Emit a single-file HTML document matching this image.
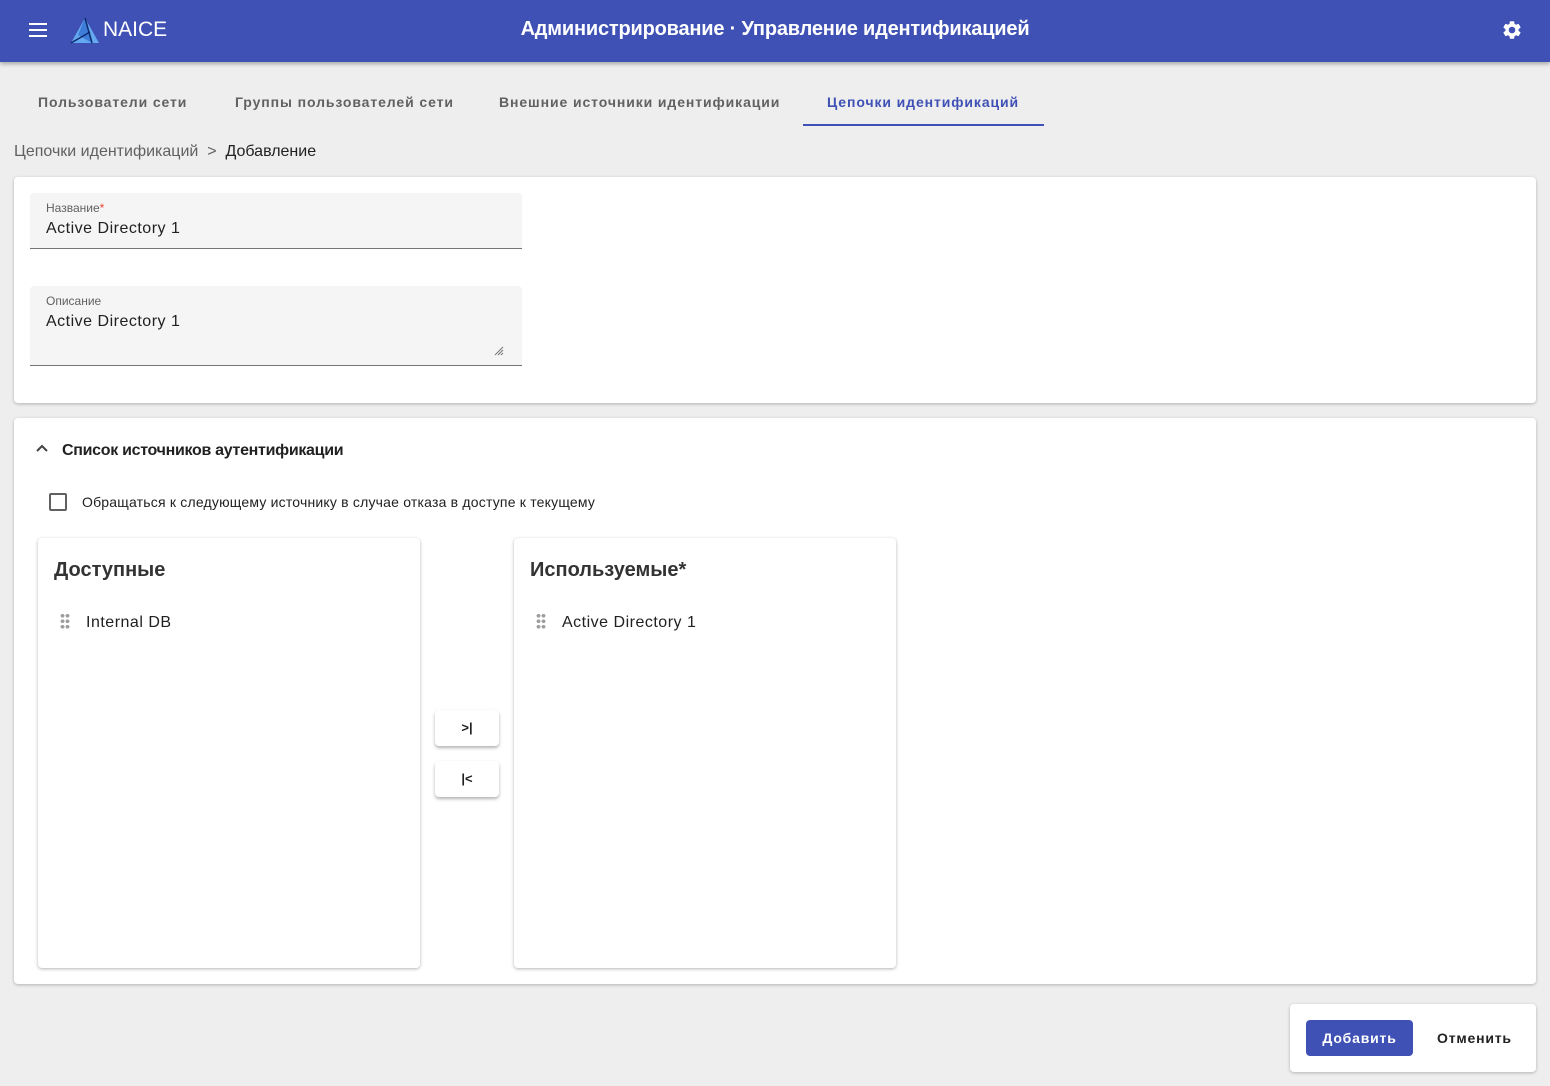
<!DOCTYPE html>
<html><head><meta charset="utf-8"><style>
*{box-sizing:border-box;margin:0;padding:0}
body{width:1550px;height:1086px;background:#eeeeee;font-family:"Liberation Sans",sans-serif;position:relative;overflow:hidden;color:#212121}
.top{position:absolute;left:0;top:0;width:1550px;height:62px;background:#3f51b5;box-shadow:0 2px 4px rgba(0,0,0,.3);color:#fff}
.abs{position:absolute}
.tab{position:absolute;top:94px;font-size:14px;font-weight:bold;letter-spacing:0.9px;color:#616161}
.card{position:absolute;background:#fff;border-radius:4px;box-shadow:0 1px 3px rgba(0,0,0,.25)}
.field{position:absolute;left:16px;width:492px;background:#f5f5f5;border-bottom:1px solid #757575;border-radius:4px 4px 0 0}
.lbl{position:absolute;left:16px;font-size:12px;color:#616161}
.val{position:absolute;left:16px;font-size:16px;color:#212121;letter-spacing:.5px}
.list{position:absolute;top:538px;width:382px;height:430px;background:#fff;border-radius:4px;box-shadow:0 1px 3px rgba(0,0,0,.3)}
.list h3{position:absolute;left:16px;top:21px;font-size:20px;font-weight:bold;color:#333}
.item{position:absolute;left:22px;top:75px;font-size:16px;letter-spacing:.5px}
.dots{display:inline-block;width:10px;height:16px;margin-right:16px;vertical-align:-2px;background:radial-gradient(circle,#9e9e9e 1.8px,transparent 2px) 0 0/5px 5.5px}
.btn{position:absolute;left:435px;width:64px;height:36px;background:#fff;border-radius:4px;box-shadow:0 2px 3px rgba(0,0,0,.3);text-align:center;line-height:36px;font-size:13px;font-weight:bold}
</style></head><body>
<div class="top">
<svg class="abs" style="left:29px;top:23px" width="18" height="14"><rect y="0" width="18" height="2" fill="#fff"/><rect y="6" width="18" height="2" fill="#fff"/><rect y="12" width="18" height="2" fill="#fff"/></svg>
<svg class="abs" style="left:70px;top:17px" width="30" height="27"><polygon points="15,1 29,26 1,26" fill="#64a8f0"/><polygon points="15,1 22,26 8,18" fill="#3d7cd8"/><path d="M15 1 L22 26 M1 26 L20 15" stroke="#0d2a6e" stroke-width="1.5"/></svg>
<div class="abs" style="left:103px;top:18px;font-size:21px">NAICE</div>
<div class="abs" style="left:0;width:1550px;top:18px;text-align:center;font-size:20px;font-weight:bold;letter-spacing:-0.2px">Администрирование · Управление идентификацией</div>
<svg class="abs" style="left:1501px;top:19px" width="22" height="22" viewBox="0 0 24 24"><path fill="#fff" d="M19.14 12.94c.04-.3.06-.61.06-.94 0-.32-.02-.64-.07-.94l2.03-1.58a.49.49 0 0 0 .12-.61l-1.920-3.32a.49.49 0 0 0-.59-.22l-2.39.96c-.5-.38-1.03-.7-1.62-.94l-.36-2.54a.48.48 0 0 0-.48-.41h-3.84c-.24 0-.43.17-.47.41l-.36 2.54c-.59.24-1.13.57-1.62.94l-2.39-.96a.48.48 0 0 0-.59.22L2.74 8.87c-.12.21-.08.47.12.61l2.03 1.58c-.05.3-.09.63-.09.94s.02.64.07.94l-2.03 1.58a.49.49 0 0 0-.12.61l1.92 3.32c.12.22.37.29.59.22l2.39-.96c.5.38 1.03.7 1.62.94l.36 2.54c.05.24.24.41.48.41h3.84c.24 0 .44-.17.47-.41l.36-2.54c.59-.24 1.130-.56 1.62-.94l2.39.96c.22.08.47 0 .59-.22l1.92-3.32c.12-.22.07-.47-.12-.61l-2.01-1.58zM12 15.6A3.6 3.6 0 1 1 12 8.4a3.6 3.6 0 0 1 0 7.2z"/></svg>
</div>
<div class="tab" style="left:38px">Пользователи сети</div>
<div class="tab" style="left:235px">Группы пользователей сети</div>
<div class="tab" style="left:499px">Внешние источники идентификации</div>
<div class="tab" style="left:827px;color:#3f51b5">Цепочки идентификаций</div>
<div class="abs" style="left:803px;top:124px;width:241px;height:2px;background:#3f51b5"></div>
<div class="abs" style="left:14px;top:143px;font-size:16px;color:#616161">Цепочки идентификаций &nbsp;&gt;&nbsp; <span style="color:#212121">Добавление</span></div>
<div class="card" style="left:14px;top:177px;width:1522px;height:226px">
<div class="field" style="top:16px;height:56px"><div class="lbl" style="top:8px">Название<span style="color:#f44336">*</span></div><div class="val" style="top:27px">Active Directory 1</div></div>
<div class="field" style="top:109px;height:80px"><div class="lbl" style="top:8px">Описание</div><div class="val" style="top:27px">Active Directory 1</div>
<svg class="abs" style="left:464px;top:60px" width="10" height="10"><path d="M9 1L1 9M9 4L4 9M9 7L7 9" stroke="#757575"/></svg></div>
</div>
<div class="card" style="left:14px;top:418px;width:1522px;height:566px"></div>
<svg class="abs" style="left:36px;top:444px" width="12" height="10"><path d="M1 7L6 2L11 7" stroke="#424242" stroke-width="2" fill="none"/></svg>
<div class="abs" style="left:62px;top:442px;font-size:16px;font-weight:bold;letter-spacing:-0.3px">Список источников аутентификации</div>
<div class="abs" style="left:49px;top:493px;width:18px;height:18px;border:2px solid #616161;border-radius:2px"></div>
<div class="abs" style="left:82px;top:494px;font-size:14px;letter-spacing:0.2px">Обращаться к следующему источнику в случае отказа в доступе к текущему</div>
<div class="list" style="left:38px"><h3>Доступные</h3><div class="item"><span class="dots"></span>Internal DB</div></div>
<div class="list" style="left:514px"><h3>Используемые*</h3><div class="item"><span class="dots"></span>Active Directory 1</div></div>
<div class="btn" style="top:710px">&gt;|</div>
<div class="btn" style="top:761px">|&lt;</div>
<div class="card" style="left:1290px;top:1004px;width:246px;height:68px"></div>
<div class="abs" style="left:1306px;top:1020px;width:107px;height:36px;background:#3f51b5;border-radius:4px;color:#fff;font-size:14px;font-weight:bold;letter-spacing:0.8px;text-align:center;line-height:36px">Добавить</div>
<div class="abs" style="left:1437px;top:1030px;font-size:14px;font-weight:bold;letter-spacing:0.8px">Отменить</div>
</body></html>
